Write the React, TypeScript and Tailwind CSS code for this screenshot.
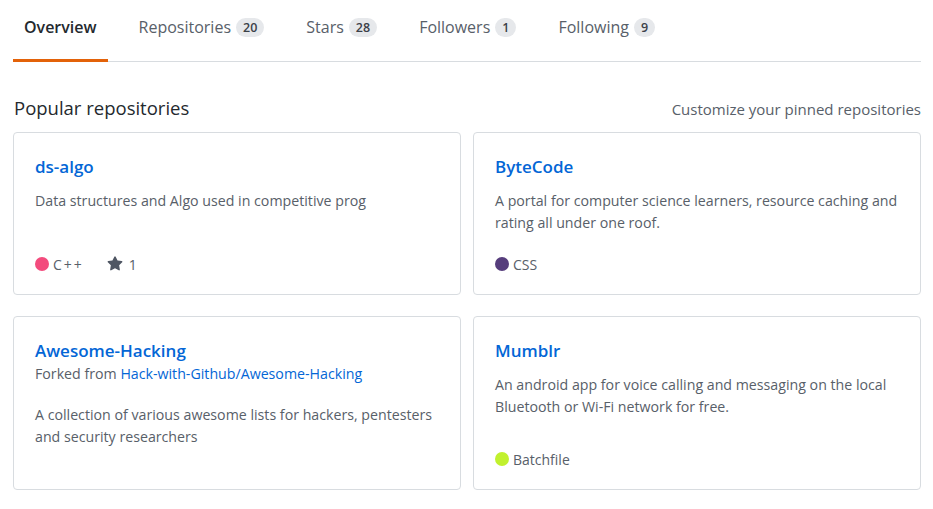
import React from "react";

type Repo = {
  name: string;
  forkedFrom?: string;
  desc: string;
  lang?: { name: string; color: string };
  stars?: number;
};

const repos: Repo[] = [
  {
    name: "ds-algo",
    desc: "Data structures and Algo used in competitive prog",
    lang: { name: "C++", color: "#f34b7d" },
    stars: 1,
  },
  {
    name: "ByteCode",
    desc: "A portal for computer science learners, resource caching and rating all under one roof.",
    lang: { name: "CSS", color: "#563d7c" },
  },
  {
    name: "Awesome-Hacking",
    forkedFrom: "Hack-with-Github/Awesome-Hacking",
    desc: "A collection of various awesome lists for hackers, pentesters and security researchers",
  },
  {
    name: "Mumblr",
    desc: "An android app for voice calling and messaging on the local Bluetooth or Wi-Fi network for free.",
    lang: { name: "Batchfile", color: "#c1f12e" },
  },
];

const tabs = [
  { label: "Overview" },
  { label: "Repositories", count: 20 },
  { label: "Stars", count: 28 },
  { label: "Followers", count: 1 },
  { label: "Following", count: 9 },
];

function StarIcon() {
  return (
    <svg width="16" height="16" viewBox="0 0 16 16" fill="#4f5663">
      <path d="M8 .25a.75.75 0 0 1 .673.418l1.882 3.815 4.21.612a.75.75 0 0 1 .416 1.279l-3.046 2.97.719 4.192a.751.751 0 0 1-1.088.791L8 12.347l-3.766 1.98a.75.75 0 0 1-1.088-.79l.72-4.194L.818 6.374a.75.75 0 0 1 .416-1.28l4.21-.611L7.327.668A.75.75 0 0 1 8 .25Z" />
    </svg>
  );
}

function RepoCard({ repo }: { repo: Repo }) {
  return (
    <div className="flex flex-col rounded-[4px] border border-[#d8dce0] bg-white pb-[19px] pl-[21px] pr-[16px] pt-[22px]">
      <a className="text-[17px] font-semibold leading-[24px] text-[#0366d6]">
        {repo.name}
      </a>
      {repo.forkedFrom && (
        <p className="mt-[1px] text-[14.2px] leading-[20px] text-[#586069]">
          Forked from <span className="text-[#0366d6]">{repo.forkedFrom}</span>
        </p>
      )}
      <p
        className={`text-[14.2px] leading-[22px] text-[#586069] ${
          repo.forkedFrom ? "mt-[20px]" : "mt-[11px]"
        } ${repo.lang ? "mb-[19px]" : "mb-[22px]"}`}
      >
        {repo.desc}
      </p>
      {repo.lang && (
        <div className="mt-auto flex h-[22px] items-center text-[14px] text-[#586069]">
          <span
            className="mr-[4px] inline-block h-[14px] w-[14px] rounded-full"
            style={{ backgroundColor: repo.lang.color }}
          />
          <span className={repo.lang.name === "C++" ? "tracking-[2px]" : ""}>
            {repo.lang.name}
          </span>
          {repo.stars !== undefined && (
            <span className="ml-[23px] flex items-center gap-[6px]">
              <StarIcon />
              {repo.stars}
            </span>
          )}
        </div>
      )}
    </div>
  );
}

export default function App() {
  return (
    <div className="min-h-screen bg-white px-[13px] pr-[12px] font-['Open_Sans',sans-serif] text-[#24292e]">
      {/* Tabs */}
      <nav className="flex gap-[20px] border-b border-[#d8dce0]">
        {tabs.map((t, i) => (
          <div
            key={t.label}
            className={`-mb-px flex items-center gap-[5px] border-b-[3px] px-[11px] pb-[19px] pt-[14px] text-[16px] leading-[26px] ${
              i === 0
                ? "border-[#e36209] font-semibold text-[#24292e]"
                : "border-transparent text-[#586069]"
            }`}
          >
            {t.label}
            {t.count !== undefined && (
              <span className="rounded-full bg-[#e6e8eb] px-[7px] text-[12.5px] font-semibold leading-[19px] text-[#3b4048]">
                {t.count}
              </span>
            )}
          </div>
        ))}
      </nav>

      {/* Header */}
      <div className="mt-[33px] flex items-baseline justify-between">
        <h2 className="pl-[1px] text-[18.5px] leading-[26px] text-[#24292e]">
          Popular repositories
        </h2>
        <a className="text-[15px] text-[#586069]">
          Customize your pinned repositories
        </a>
      </div>

      {/* Pinned grid */}
      <div className="mt-[11px] grid grid-cols-2 gap-x-[12px] gap-y-[21px]">
        {repos.map((r) => (
          <RepoCard key={r.name} repo={r} />
        ))}
      </div>
    </div>
  );
}
